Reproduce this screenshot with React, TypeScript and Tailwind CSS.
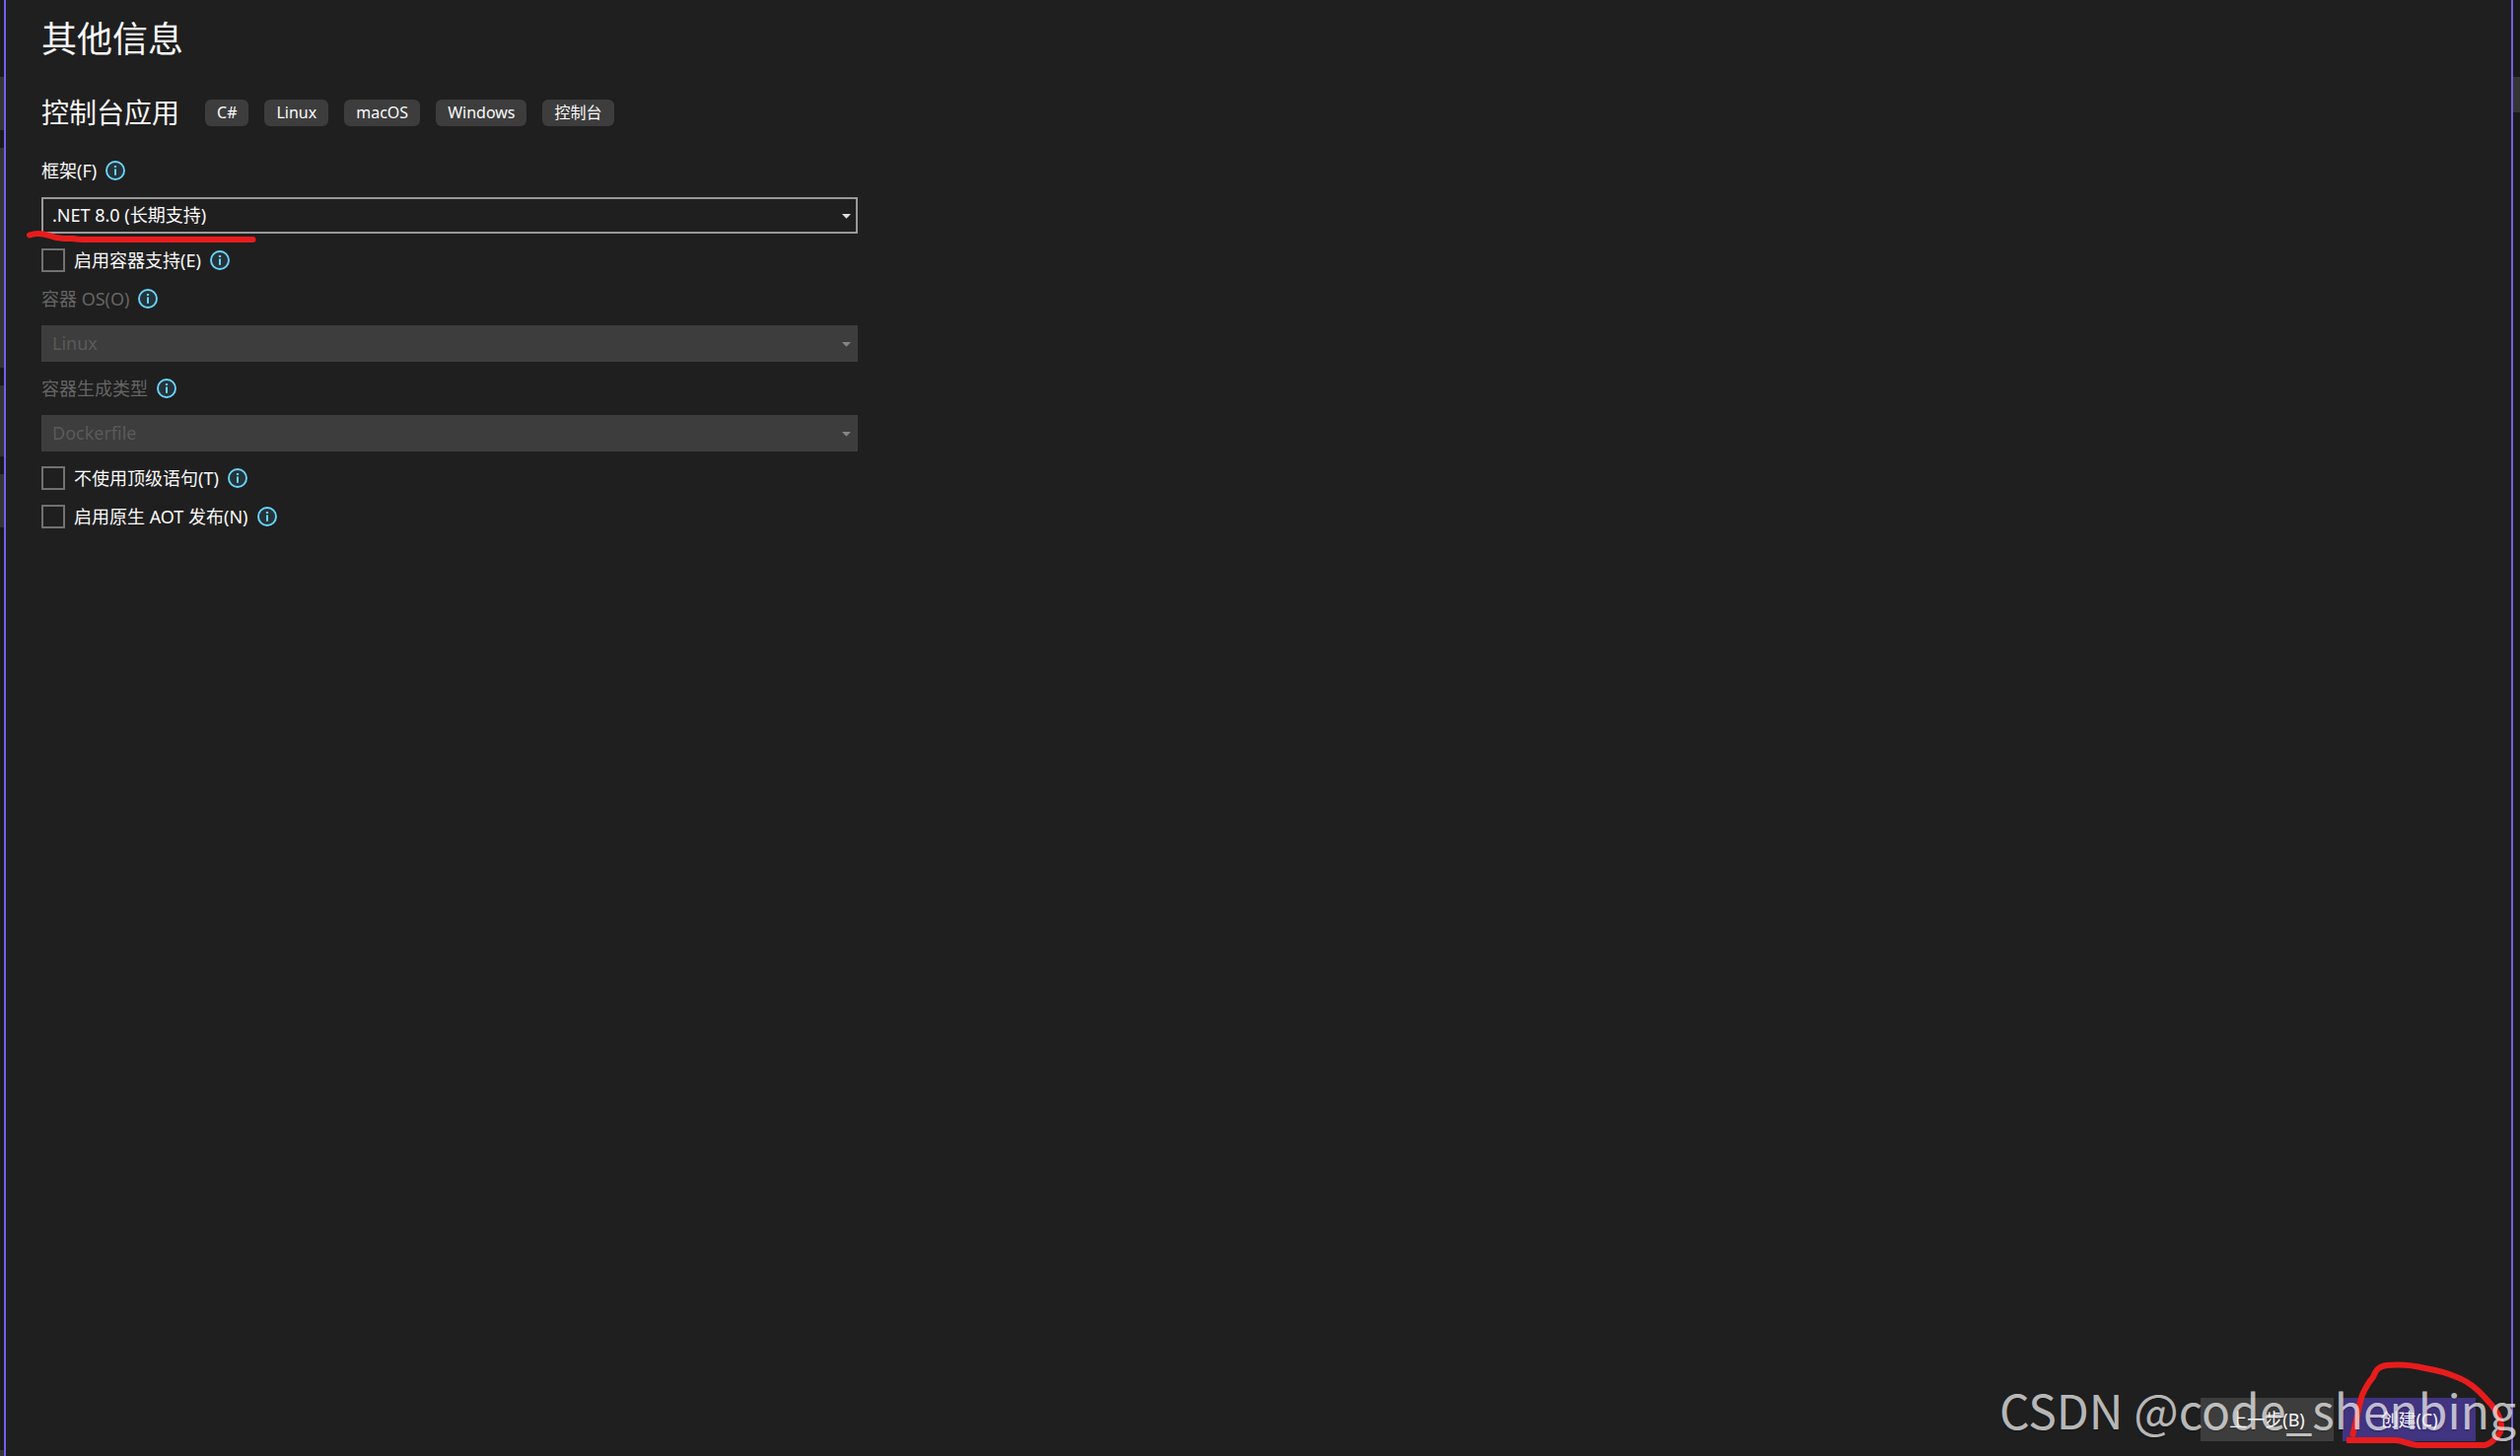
import { useState } from "react"

type Option = { id: string, label: string, value: string, disabled?: boolean }

const tags = ['C#', 'Linux', 'macOS', 'Windows', '控制台']

const InfoIcon = () => (
  <svg viewBox="0 0 20 20" className="size-5 shrink-0" aria-hidden="true">
    <circle cx="10" cy="10" r="9" fill="#25333a" stroke="#6ad4fb" strokeWidth="1.9" />
    <rect x="9" y="8.4" width="2" height="6.4" fill="#6ad4fb" />
    <rect x="8.9" y="5" width="2.2" height="2" fill="#6ad4fb" />
  </svg>
)

const SelectField = ({ id, label, value, disabled }: Option) => (
  <>
    <div className="flex h-6 items-center gap-[9px]">
      <label htmlFor={id} className={disabled ? "text-[#656565]" : "text-[#fafafa]"}>{label}</label>
      <InfoIcon />
    </div>
    <div className="relative w-full max-w-[828px]">
      <select
        id={id}
        disabled={disabled}
        className="block h-[37px] w-full appearance-none border-2 border-[#999999] bg-[#1f1f1f] pr-8 pb-0.5 pl-[9px] text-[#fafafa] opacity-100 disabled:border-[#3d3d3d] disabled:bg-[#3d3d3d] disabled:text-[#5a5a5a]"
      >
        <option>{value}</option>
      </select>
      <svg
        viewBox="0 0 9 5"
        className={`pointer-events-none absolute top-[17px] right-[7px] h-[5px] w-[9px] ${disabled ? "fill-[#858585]" : "fill-[#dedede]"}`}
        aria-hidden="true"
      >
        <path d="M0 0h9L4.5 4.8z" />
      </svg>
    </div>
  </>
)

const CheckField = ({ id, label }: { id: string, label: string }) => {
  const [checked, setChecked] = useState(false)

  return (
    <div className="flex h-6 items-center gap-[9px]">
      <input
        id={id}
        type="checkbox"
        checked={checked}
        onChange={(e) => setChecked(e.target.checked)}
        className="size-6 shrink-0 appearance-none border-2 border-[#717171] checked:bg-[#7160e8]"
      />
      <label htmlFor={id}>{label}</label>
      <InfoIcon />
    </div>
  )
}

const App = () => {
  return (
    <div
      className="relative flex min-h-screen overflow-hidden bg-[#1a1a1a] text-lg text-[#fafafa]"
      style={{ fontFamily: '"Noto Sans", "Noto Sans CJK SC", sans-serif' }}
    >
      <div className="flex w-1 shrink-0 flex-col gap-[18px] pt-[78px]">
        <div className="h-[54px] bg-[#353535]" />
        <div className="h-[223px] bg-[#353535]" />
        <div className="h-[72px] bg-[#353535]" />
        <div className="h-[54px] bg-[#353535]" />
        <div className="mt-auto h-1.5 bg-[#353535]" />
      </div>

      <main className="flex grow flex-col border-x-2 border-[#7160e8] bg-[#1f1f1f] px-9 pt-4 pb-[15px]">
        <h1 className="text-4xl leading-12">其他信息</h1>

        <div className="mt-[30px] flex items-center gap-[26px]">
          <h2 className="text-[28px] leading-10">控制台应用</h2>
          <ul className="flex gap-4">
            {tags.map((tag) => (
              <li key={tag} className="h-[27px] rounded-md bg-[#3d3d3d] px-3 text-base leading-[27px]">{tag}</li>
            ))}
          </ul>
        </div>

        <form className="mt-[27px] flex flex-col gap-[15px] leading-6">
          <SelectField id="framework" label="框架(F)" value=".NET 8.0 (长期支持)" />
          <CheckField id="container" label="启用容器支持(E)" />
          <SelectField id="os" label="容器 OS(O)" value="Linux" disabled />
          <SelectField id="build" label="容器生成类型" value="Dockerfile" disabled />
          <CheckField id="top-level" label="不使用顶级语句(T)" />
          <CheckField id="aot" label="启用原生 AOT 发布(N)" />
        </form>

        <div className="mt-auto flex justify-end gap-[9px]">
          <button type="button" className="h-11 w-[135px] bg-[#3d3d3d]">上一步(B)</button>
          <button type="button" className="h-11 w-[135px] bg-[#413480]">创建(C)</button>
        </div>
      </main>

      <div className="flex w-[7px] shrink-0 flex-col pt-[78px]">
        <div className="h-9 bg-[#353535]" />
        <div className="mt-auto h-1.5 bg-[#353535]" />
      </div>

      {/* hand drawn marks */}
      <svg viewBox="0 0 240 20" className="pointer-events-none absolute top-[230px] left-6 h-5 w-60" fill="none" stroke="#e81c1c" strokeWidth="6" strokeLinecap="round" strokeLinejoin="round">
        <path d="M6 8.500C13 6 20 7 26 9Q34 12 41 12H50Q55 13 60 13H232.500" />
      </svg>
      <svg viewBox="0 0 176 97" className="pointer-events-none absolute right-0 bottom-0 h-[97px] w-44" fill="none" stroke="#e81c1c" strokeWidth="6" strokeLinecap="round" strokeLinejoin="round">
        <path d="M6.500 75Q9 65 11 56Q13 44 16 35Q21 24 27 17C30 9 33 6 41 5Q60 3 80 8Q98 11 112 17C128 23 138 35 147 45Q156 56 157 65Q158 73 152 78Q146 85 140 86H72C63 86 60 82 50 81H1" />
      </svg>
      <p className="pointer-events-none absolute right-1 bottom-3 font-[Noto_Sans_CJK_SC] text-5xl leading-[72px] whitespace-nowrap text-white/70 text-shadow-sm">CSDN @code_shenbing</p>
    </div>
  )
}

export default App
